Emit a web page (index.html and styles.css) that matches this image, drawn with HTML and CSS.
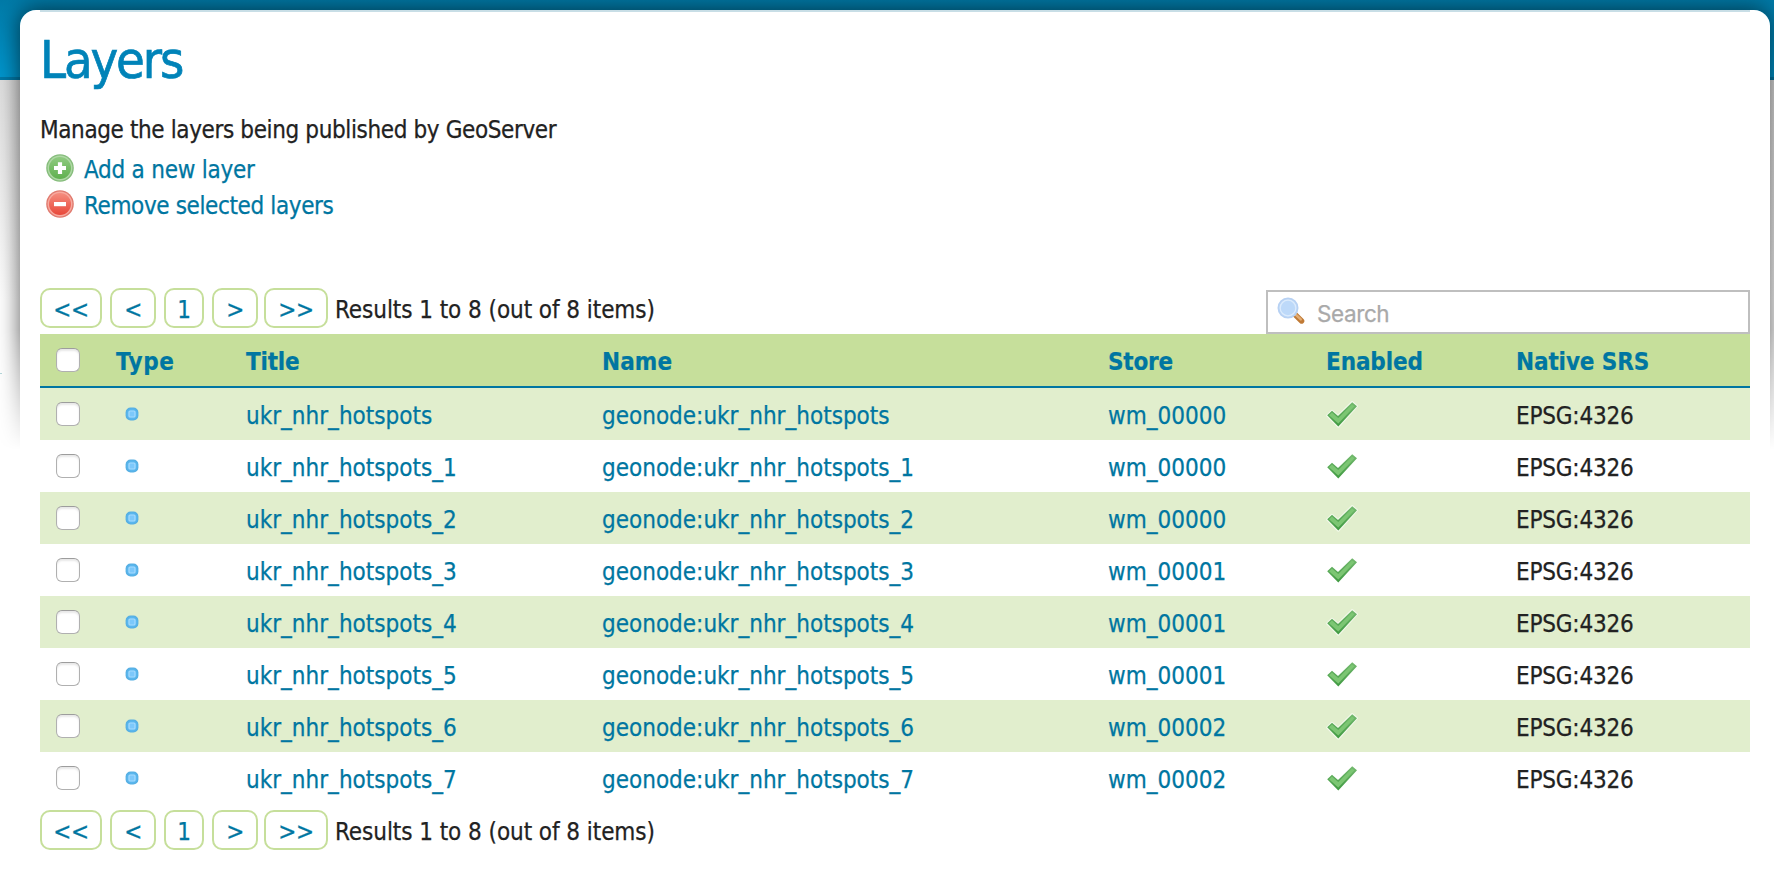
FILE: index.html
```html
<!DOCTYPE html>
<html lang="en">
<head>
<meta charset="utf-8">
<title>GeoServer: Layers</title>
<link rel="stylesheet" href="styles.css">
</head>
<body>
<svg class="defs" width="0" height="0" aria-hidden="true">
  <defs>
    <linearGradient id="g-add" x1="0" y1="0" x2="0" y2="1"><stop offset="0" stop-color="#8fca80"/><stop offset="1" stop-color="#5fb04e"/></linearGradient>
    <linearGradient id="g-del" x1="0" y1="0" x2="0" y2="1"><stop offset="0" stop-color="#f58d7f"/><stop offset="1" stop-color="#e8483a"/></linearGradient>
    <linearGradient id="g-tick" x1="0" y1="0" x2="0" y2="1"><stop offset="0" stop-color="#74b96f"/><stop offset="1" stop-color="#3f9a41"/></linearGradient>
    <radialGradient id="g-dot"><stop offset="0" stop-color="#8ed0fb"/><stop offset=".6" stop-color="#5cbaf3"/><stop offset="1" stop-color="#55aee2"/></radialGradient>
    <symbol id="tick" viewBox="0 0 32 28">
      <path d="M1.2 15.5 6 10.8 12 16 26.2 2 31 6.2 12.3 26.8Z" fill="#fff" opacity=".6" stroke="#fff" stroke-width="2" stroke-linejoin="round"/>
      <path d="M1.2 15.3 6 10.8 12 16 26.2 2.2 31 6.2 12.3 26.6Z" fill="url(#g-tick)"/>
      <path d="M3 15.2 6 12.4 12.2 18 26 4.4 28.6 6.2 12.3 23.6Z" fill="#7cc673"/>
    </symbol>
    <symbol id="dot" viewBox="0 0 14 14">
      <rect x=".6" y=".6" width="12.8" height="12.8" rx="5" fill="url(#g-dot)"/>
      <rect x="4" y="4" width="6" height="6" rx="1" fill="#7cc8fb" stroke="#a6dafd" stroke-width="1.2"/>
    </symbol>
  </defs>
</svg>
<div class="banner"></div>
<div class="side-rule"></div>
<div class="shade"><div class="shade-box"></div></div>
<main class="page">
  <h1 class="title">Layers</h1>
  <p class="intro">Manage the layers being published by GeoServer</p>
  <ul class="actions">
    <li class="action">
      <svg class="action-icon" viewBox="0 0 28 28"><circle cx="14" cy="14" r="13.8" fill="#86bd7c"/><circle cx="14" cy="14" r="12.4" fill="#b0d8a6"/><circle cx="14" cy="14" r="11" fill="url(#g-add)"/><path d="M11.9 8.2h4.2v3.7h3.9v4.2h-3.9v3.9h-4.2v-3.9H8v-4.2h3.9Z" fill="#fff"/></svg>
      <a class="link add">Add a new layer</a>
    </li>
    <li class="action">
      <svg class="action-icon" viewBox="0 0 28 28"><circle cx="14" cy="14" r="13.8" fill="#e07a6e"/><circle cx="14" cy="14" r="12.4" fill="#f7aaa0"/><circle cx="14" cy="14" r="11" fill="url(#g-del)"/><rect x="8" y="12" width="12" height="4.2" fill="#fff"/></svg>
      <a class="link remove">Remove selected layers</a>
    </li>
  </ul>
  <div class="toolbar">
    <div class="pager">
      <a class="pg w-first">&lt;&lt;</a><a class="pg w-arrow">&lt;</a><a class="pg w-num">1</a><a class="pg w-arrow">&gt;</a><a class="pg w-last">&gt;&gt;</a>
      <span class="results">Results 1 to 8 (out of 8 items)</span>
    </div>
    <label class="search">
      <svg class="search-icon" viewBox="0 0 28 28"><path d="M18 17.5 24.6 24" stroke="#c07a35" stroke-width="5.4" stroke-linecap="round"/><path d="M18 17 23.8 22.4" stroke="#e3ad74" stroke-width="2.4" stroke-linecap="round"/><circle cx="11" cy="11" r="9.6" fill="#c4dcf8" stroke="#b7d1f3" stroke-width="1.8"/><circle cx="11" cy="11" r="7.8" fill="#bdd9f9" stroke="#dcebfc" stroke-width="1.2"/></svg>
      <span class="placeholder">Search</span>
    </label>
  </div>
  <table class="layers">
    <colgroup><col class="c-sel"><col class="c-type"><col class="c-title"><col class="c-name"><col class="c-store"><col class="c-enabled"><col></colgroup>
    <thead>
      <tr><th><span class="box"></span></th><th class="h-type">Type</th><th class="h-title">Title</th><th class="h-name">Name</th><th class="h-store">Store</th><th>Enabled</th><th>Native SRS</th></tr>
    </thead>
    <tbody>
      <tr><td><span class="box"></span></td><td><svg class="dot"><use href="#dot"/></svg></td><td><a class="link">ukr_nhr_hotspots</a></td><td><a class="link">geonode:ukr_nhr_hotspots</a></td><td><a class="link">wm_00000</a></td><td><svg class="tick"><use href="#tick"/></svg></td><td class="srs">EPSG:4326</td></tr>
      <tr><td><span class="box"></span></td><td><svg class="dot"><use href="#dot"/></svg></td><td><a class="link">ukr_nhr_hotspots_1</a></td><td><a class="link">geonode:ukr_nhr_hotspots_1</a></td><td><a class="link">wm_00000</a></td><td><svg class="tick"><use href="#tick"/></svg></td><td class="srs">EPSG:4326</td></tr>
      <tr><td><span class="box"></span></td><td><svg class="dot"><use href="#dot"/></svg></td><td><a class="link">ukr_nhr_hotspots_2</a></td><td><a class="link">geonode:ukr_nhr_hotspots_2</a></td><td><a class="link">wm_00000</a></td><td><svg class="tick"><use href="#tick"/></svg></td><td class="srs">EPSG:4326</td></tr>
      <tr><td><span class="box"></span></td><td><svg class="dot"><use href="#dot"/></svg></td><td><a class="link">ukr_nhr_hotspots_3</a></td><td><a class="link">geonode:ukr_nhr_hotspots_3</a></td><td><a class="link">wm_00001</a></td><td><svg class="tick"><use href="#tick"/></svg></td><td class="srs">EPSG:4326</td></tr>
      <tr><td><span class="box"></span></td><td><svg class="dot"><use href="#dot"/></svg></td><td><a class="link">ukr_nhr_hotspots_4</a></td><td><a class="link">geonode:ukr_nhr_hotspots_4</a></td><td><a class="link">wm_00001</a></td><td><svg class="tick"><use href="#tick"/></svg></td><td class="srs">EPSG:4326</td></tr>
      <tr><td><span class="box"></span></td><td><svg class="dot"><use href="#dot"/></svg></td><td><a class="link">ukr_nhr_hotspots_5</a></td><td><a class="link">geonode:ukr_nhr_hotspots_5</a></td><td><a class="link">wm_00001</a></td><td><svg class="tick"><use href="#tick"/></svg></td><td class="srs">EPSG:4326</td></tr>
      <tr><td><span class="box"></span></td><td><svg class="dot"><use href="#dot"/></svg></td><td><a class="link">ukr_nhr_hotspots_6</a></td><td><a class="link">geonode:ukr_nhr_hotspots_6</a></td><td><a class="link">wm_00002</a></td><td><svg class="tick"><use href="#tick"/></svg></td><td class="srs">EPSG:4326</td></tr>
      <tr><td><span class="box"></span></td><td><svg class="dot"><use href="#dot"/></svg></td><td><a class="link">ukr_nhr_hotspots_7</a></td><td><a class="link">geonode:ukr_nhr_hotspots_7</a></td><td><a class="link">wm_00002</a></td><td><svg class="tick"><use href="#tick"/></svg></td><td class="srs">EPSG:4326</td></tr>
    </tbody>
  </table>
  <div class="pager pager-bottom">
    <a class="pg w-first">&lt;&lt;</a><a class="pg w-arrow">&lt;</a><a class="pg w-num">1</a><a class="pg w-arrow">&gt;</a><a class="pg w-last">&gt;&gt;</a>
    <span class="results">Results 1 to 8 (out of 8 items)</span>
  </div>
</main>
</body>
</html>
```
FILE: styles.css
```css
* { box-sizing: border-box; }
html, body { margin: 0; height: 896px; overflow: hidden; }
body {
  position: relative;
  font-family: "DejaVu Sans Condensed", "DejaVu Sans", sans-serif;
  font-stretch: condensed;
  font-size: 24px;
  line-height: 30px;
  letter-spacing: -0.38px;
  -webkit-text-stroke: 0.25px currentColor;
  color: #222;
  background: linear-gradient(#dfdfdf 80px, #fff 300px) no-repeat #fff;
}
.defs { position: absolute; }
/* blue strip and page shadow lie behind the page panel */
.banner {
  position: absolute; top: 0; left: 0; right: 0; height: 80px;
  background: linear-gradient(#007aa7, #0095cc 75px);
  border-bottom: 3px solid #0079a8;
}
.side-rule { position: absolute; top: 373px; left: 0; width: 2px; height: 1px; background: #b5d9dc; }
.shade {
  position: absolute; top: 0; left: 0; right: 0; height: 450px; overflow: hidden;
  -webkit-mask-image: linear-gradient(#000 330px, transparent 450px);
  mask-image: linear-gradient(#000 330px, transparent 450px);
}
.shade-box {
  margin: 10px 4px 0 20px; height: 600px; border-radius: 16px;
  box-shadow: 0 0 22px 1px rgba(0, 0, 0, .6);
}
.page {
  position: relative;
  margin: 10px 4px 0 20px; height: 886px;
  padding: 20px 20px 0;
  border-radius: 16px 16px 0 0;
  background: linear-gradient(#c8dee6, #c8dee6) 20px 0 / calc(100% - 40px) 2px no-repeat #fff;
}
.title { margin: 0; font-size: 52px; font-weight: 400; line-height: 60px; letter-spacing: -2.1px; color: #0083b8; -webkit-text-stroke-width: .7px; }
.intro { margin: 25px 0 0; height: 36px; }
.actions { list-style: none; margin: 0; padding: 0 0 0 6px; }
.action { display: flex; gap: 10px; height: 36px; line-height: 36px; }
.action .link { padding-top: 1px; }
.add { letter-spacing: -.25px; }
.action-icon { width: 28px; height: 28px; margin-top: 3px; }
.link { color: #0076a1; }
.toolbar { display: flex; justify-content: space-between; align-items: flex-start; margin-top: 65px; height: 46px; }
.pager { display: flex; }
.pager-bottom { margin-top: 6px; }
.pg { height: 40px; margin-right: 8px; padding-top: 2px; border: 2px solid #c6df9b; border-radius: 10px; text-align: center; line-height: 36px; color: #0076a1; }
.w-first { width: 62px; }
.w-arrow { width: 46px; }
.w-num { width: 40px; }
.w-last { width: 64px; margin: 0 7px 0 -2px; }
.results { padding-top: 2px; line-height: 40px; letter-spacing: -.06px; }
.search { display: flex; width: 484px; height: 44px; margin-top: 2px; padding: 5px 0 0 9px; border: 2px solid #bfbfbf; background: #fff; }
.search-icon { width: 28px; height: 28px; }
.placeholder { margin: 2px 0 0 12px; font-family: Inter, sans-serif; font-stretch: normal; font-size: 22.5px; letter-spacing: -.4px; color: #a9a9a9; }
.layers { width: 100%; table-layout: fixed; border-collapse: separate; border-spacing: 0; }
.c-sel { width: 76px; }
.c-type { width: 130px; }
.c-title { width: 356px; }
.c-name { width: 506px; }
.c-store { width: 218px; }
.c-enabled { width: 190px; }
th, td { padding: 0; text-align: left; vertical-align: top; white-space: nowrap; }
th { height: 54px; padding-top: 4px; line-height: 48px; border-bottom: 2px solid #0076a1; background: #c6df9b; color: #0076a1; font-weight: 700; letter-spacing: -.12px; -webkit-text-stroke-width: .2px; }
.h-type { letter-spacing: .6px; }
.h-title, .h-store { letter-spacing: -.2px; }
.h-name { letter-spacing: .1px; }
td { height: 52px; padding-top: 4px; line-height: 48px; letter-spacing: 0; }
.srs { letter-spacing: -.2px; }
tbody tr:nth-child(odd) { background: #e1eecd; }
.box { display: block; width: 24px; height: 24px; margin: 10px 0 0 16px; border: 1.5px solid #b0b0b0; border-top-color: #9d9d9d; border-radius: 6px; background: #fff; box-shadow: inset 0 2px 2px #e8e8e8; }
.dot { display: block; width: 14px; height: 14px; margin: 15px 0 0 9px; }
.tick { display: block; width: 32px; height: 28px; margin: 8px 0 0 0; }
```
